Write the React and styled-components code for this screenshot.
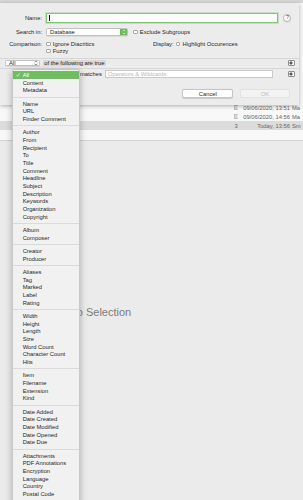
import React from 'react'
import styled, { createGlobalStyle } from 'styled-components'

const GlobalStyle = createGlobalStyle`
  html, body { margin: 0; padding: 0; }
  body {
    background: #ebebeb;
    font-family: "Liberation Sans", Arial, sans-serif;
    color: #222;
    overflow: hidden;
  }
  * { box-sizing: border-box; }
`

const MENU_ITEMS = [
  ['All', 'Content', 'Metadata'],
  ['Name', 'URL', 'Finder Comment'],
  ['Author', 'From', 'Recipient', 'To', 'Title', 'Comment', 'Headline', 'Subject', 'Description', 'Keywords', 'Organization', 'Copyright'],
  ['Album', 'Composer'],
  ['Creator', 'Producer'],
  ['Aliases', 'Tag', 'Marked', 'Label', 'Rating'],
  ['Width', 'Height', 'Length', 'Size', 'Word Count', 'Character Count', 'Hits'],
  ['Item', 'Filename', 'Extension', 'Kind'],
  ['Date Added', 'Date Created', 'Date Modified', 'Date Opened', 'Date Due'],
  ['Attachments', 'PDF Annotations', 'Encryption', 'Language', 'Country', 'Postal Code'],
]

// rows hidden behind the sheet stay empty, only the last three show
const ROWS = [
  {}, {}, {}, {}, {}, {}, {}, {}, {}, {}, {},
  { date: '09/06/2020, 13:51', name: 'Ma', icon: true },
  { date: '09/06/2020, 14:56', name: 'Ma', icon: true },
  { date: 'Today, 13:56', name: 'Sm', count: '3', selected: true },
]

const Window = styled.div`
  position: relative;
  width: 303px;
  height: 500px;
  overflow: hidden;
  display: flex;
  flex-direction: column;
  background: #ebebeb;
`

const TopStrip = styled.div`
  flex: none;
  height: 3px;
  background: #d7d7d7;
`

const Table = styled.div`
  flex: none;
  height: 138px;
  padding-top: 1.2px;
  background: #f8f8f8;
  border-bottom: 1px solid #d3d3d3;
  display: flex;
  flex-direction: column;
`

const Row = styled.div`
  flex: none;
  height: 9px;
  display: flex;
  align-items: center;
  font-size: 5.8px;
  color: #666;
  background: ${p => (p.$selected ? '#dcdcdc' : 'transparent')};
`

const RowSpacer = styled.div`
  flex: 1;
`

const IconCell = styled.div`
  width: 10px;
  display: flex;
  justify-content: center;
  align-items: center;
`

const DateCell = styled.div`
  width: 49px;
  text-align: right;
  white-space: nowrap;
`

const NameCell = styled.div`
  width: 13px;
  padding-left: 2px;
  white-space: nowrap;
  overflow: hidden;
`

const LowerArea = styled.div`
  flex: 1;
  display: flex;
`

const InfoPane = styled.div`
  width: 200px;
  display: flex;
  align-items: center;
  justify-content: center;
  padding-bottom: 17px;
  font-size: 11px;
  color: #7b7b7b;
`

/* search sheet */

const Sheet = styled.div`
  position: absolute;
  top: 3px;
  left: 0;
  width: 299px;
  height: 102px;
  background: #ececec;
  box-shadow: 0 1px 4px rgba(0, 0, 0, 0.3);
  padding-top: 9.5px;
  display: flex;
  flex-direction: column;
  font-size: 5.8px;
  color: #1f1f1f;
`

const FormRow = styled.div`
  flex: none;
  display: flex;
  align-items: center;
  height: ${p => p.$h}px;
  margin-top: ${p => p.$mt || 0}px;
  padding-left: ${p => p.$pl || 0}px;
  padding-right: ${p => p.$pr || 0}px;
  justify-content: ${p => p.$justify || 'flex-start'};
`

const Label = styled.div`
  width: 42px;
  text-align: right;
  margin-right: 4px;
  white-space: nowrap;
`

const NameField = styled.div`
  width: 231.7px;
  height: 10.6px;
  background: #fff;
  border: 1px solid #83c673;
  box-shadow: 0 0 0 0.8px rgba(131, 198, 115, 0.45);
  display: flex;
  align-items: center;
  padding-left: 1.5px;
`

const Caret = styled.div`
  width: 0.7px;
  height: 6.5px;
  background: #111;
`

const HelpButton = styled.div`
  width: 8px;
  height: 8px;
  margin-left: 5.8px;
  border-radius: 50%;
  background: #fff;
  border: 0.5px solid #b8b8b8;
  box-shadow: 0 0.5px 0.5px rgba(0, 0, 0, 0.12);
  display: flex;
  align-items: center;
  justify-content: center;
  font-size: 5.2px;
  line-height: 1;
  color: #444;
`

const Popup = styled.div`
  width: ${p => p.$w}px;
  height: ${p => p.$h}px;
  margin-left: ${p => p.$ml || 0}px;
  background: #fff;
  border: 0.5px solid #c2c2c2;
  border-radius: 1.5px;
  box-shadow: 0 0.5px 0.6px rgba(0, 0, 0, 0.14);
  display: flex;
  align-items: center;
  padding-left: 3px;
  overflow: hidden;
`

const PopupText = styled.span`
  flex: 1;
  white-space: nowrap;
`

const Stepper = styled.div`
  width: ${p => (p.$accent ? 6.7 : 6)}px;
  align-self: stretch;
  display: flex;
  align-items: center;
  justify-content: center;
  background: ${p => (p.$accent ? '#66b956' : 'transparent')};
  color: ${p => (p.$accent ? '#fff' : '#555')};
`

const Check = styled.div`
  width: 4.6px;
  height: 4.6px;
  margin-left: ${p => p.$ml || 0}px;
  margin-right: 2.2px;
  background: #fff;
  border: 0.5px solid #a9a9a9;
  border-radius: 1px;
  flex: none;
`

const OptionGroup = styled.div`
  width: 107px;
  display: flex;
  align-items: center;
`

const DisplayLabel = styled.div`
  width: 20px;
  margin-right: 2.8px;
  white-space: nowrap;
`

const CompareBlock = styled.div`
  flex: none;
  margin-top: 4px;
  display: flex;
  flex-direction: column;
`

const Divider = styled.div`
  flex: none;
  height: 1px;
  margin-top: ${p => p.$mt || 0}px;
  background: #d6d6d6;
`

const Chip = styled.div`
  margin-left: 3px;
  height: 6.6px;
  padding: 0 1.2px;
  background: #dadada;
  display: flex;
  align-items: center;
  white-space: nowrap;
`

const Grow = styled.div`
  flex: 1;
`

const PlusButton = styled.div`
  width: 6.4px;
  height: 5.8px;
  background: #fff;
  border: 0.5px solid #8d8d8d;
  border-radius: 1px;
  display: flex;
  align-items: center;
  justify-content: center;
  flex: none;
`

const MatchLabel = styled.div`
  width: 25px;
  margin-left: 5px;
  white-space: nowrap;
`

const TextField = styled.div`
  width: 168.3px;
  height: 8.3px;
  background: #fff;
  border: 0.5px solid #c9c9c9;
  display: flex;
  align-items: center;
  padding-left: 2px;
  color: #b9b9b9;
  margin-right: 15px;
  white-space: nowrap;
`

const PushButton = styled.div`
  width: ${p => p.$w}px;
  height: 9.3px;
  margin-left: ${p => p.$ml || 0}px;
  border-radius: 2px;
  display: flex;
  align-items: center;
  justify-content: center;
  background: ${p => (p.$disabled ? '#f3f3f3' : '#fff')};
  color: ${p => (p.$disabled ? '#bdbdbd' : '#1f1f1f')};
  border: 0.5px solid ${p => (p.$disabled ? '#e2e2e2' : '#c4c4c4')};
  box-shadow: ${p => (p.$disabled ? 'none' : '0 0.5px 0.8px rgba(0,0,0,0.15)')};
`

/* field menu */

const Menu = styled.div`
  position: absolute;
  top: 69px;
  left: 12px;
  width: 68px;
  height: 440px;
  padding-top: 1.2px;
  background: #f1f1f1;
  border: 0.5px solid #c8c8c8;
  border-radius: 2px;
  box-shadow: 0 2px 7px rgba(0, 0, 0, 0.28);
  overflow: hidden;
  font-size: 5.8px;
`

const MenuItem = styled.div`
  height: 7.66px;
  display: flex;
  align-items: center;
  white-space: nowrap;
  color: ${p => (p.$active ? '#fff' : '#262626')};
  background: ${p => (p.$active ? '#6cbf5c' : 'transparent')};
`

const CheckSlot = styled.div`
  width: 9.7px;
  flex: none;
  display: flex;
  justify-content: center;
  padding-left: 1px;
`

const MenuSeparator = styled.div`
  height: 5.73px;
  display: flex;
  align-items: center;
  &::after {
    content: '';
    flex: 1;
    height: 1px;
    background: #dadada;
  }
`

const ScrollArrow = styled.div`
  height: 8px;
  display: flex;
  justify-content: center;
  align-items: center;
  &::after {
    content: '';
    border-left: 2.5px solid transparent;
    border-right: 2.5px solid transparent;
    border-top: 3px solid #333;
  }
`

function Chevrons({ color = 'currentColor' }) {
  return (
    <svg width="4" height="6" viewBox="0 0 4 6">
      <path d="M0.6 2.3 L2 0.9 L3.4 2.3 M0.6 3.7 L2 5.1 L3.4 3.7" fill="none" stroke={color} strokeWidth="0.7" />
    </svg>
  )
}

function PlusIcon() {
  return (
    <svg width="4" height="4" viewBox="0 0 4 4">
      <path d="M2 0.3 V3.7 M0.3 2 H3.7" stroke="#111" strokeWidth="0.9" />
    </svg>
  )
}

function CheckIcon() {
  return (
    <svg width="4.2" height="4" viewBox="0 0 8 8">
      <path d="M1 4.4 L3 6.6 L7 1.2" fill="none" stroke="#fff" strokeWidth="1.3" strokeLinecap="round" strokeLinejoin="round" />
    </svg>
  )
}

function DocIcon() {
  return (
    <svg width="4.5" height="5" viewBox="0 0 9 10">
      <rect x="0.5" y="0.5" width="8" height="9" fill="#f4f4f4" stroke="#9a9a9a" />
      <path d="M2 3.5 H7 M2 5.5 H7 M2 7.5 H7" stroke="#aaa" />
    </svg>
  )
}

function FieldMenu() {
  return (
    <Menu>
      {MENU_ITEMS.map((group, gi) => (
        <React.Fragment key={gi}>
          {gi > 0 && <MenuSeparator />}
          {group.map(item => (
            <MenuItem key={item} $active={item === 'All'}>
              <CheckSlot>{item === 'All' && <CheckIcon />}</CheckSlot>
              {item}
            </MenuItem>
          ))}
        </React.Fragment>
      ))}
      <ScrollArrow />
    </Menu>
  )
}

function SearchSheet() {
  return (
    <Sheet>
      <FormRow $h={11}>
        <Label>Name:</Label>
        <NameField><Caret /></NameField>
        <HelpButton>?</HelpButton>
      </FormRow>
      <FormRow $h={9} $mt={4}>
        <Label>Search in:</Label>
        <Popup $w={82} $h={8}>
          <PopupText>Database</PopupText>
          <Stepper $accent><Chevrons /></Stepper>
        </Popup>
        <Check $ml={5} />
        <span>Exclude Subgroups</span>
      </FormRow>
      <CompareBlock>
        <FormRow $h={7}>
          <Label>Comparison:</Label>
          <OptionGroup>
            <Check />
            <span>Ignore Diacritics</span>
          </OptionGroup>
          <DisplayLabel>Display:</DisplayLabel>
          <Check />
          <span>Highlight Occurences</span>
        </FormRow>
        <FormRow $h={7}>
          <Label />
          <Check />
          <span>Fuzzy</span>
        </FormRow>
      </CompareBlock>
      <Divider $mt={3} />
      <FormRow $h={9} $pl={5} $pr={4.5}>
        <Popup $w={35} $h={6.6}>
          <PopupText>All</PopupText>
          <Stepper><Chevrons /></Stepper>
        </Popup>
        <Chip>of the following are true</Chip>
        <Grow />
        <PlusButton><PlusIcon /></PlusButton>
      </FormRow>
      <Divider />
      <FormRow $h={11} $pl={15} $pr={4.5}>
        {/* the field popup whose menu is open; the menu covers it */}
        <Popup $w={60} $h={7} />
        <MatchLabel>matches</MatchLabel>
        <TextField>Operators &amp; Wildcards</TextField>
        <PlusButton><PlusIcon /></PlusButton>
      </FormRow>
      <FormRow $h={9.3} $mt={9.5} $pr={9} $justify="flex-end">
        <PushButton $w={51}>Cancel</PushButton>
        <PushButton $w={50} $ml={6.7} $disabled>OK</PushButton>
      </FormRow>
    </Sheet>
  )
}

export default function App() {
  return (
    <Window>
      <GlobalStyle />
      <TopStrip />
      <Table>
        {ROWS.map((r, i) => (
          <Row key={i} $selected={r.selected}>
            <RowSpacer />
            <IconCell>{r.count ? r.count : r.icon ? <DocIcon /> : null}</IconCell>
            <DateCell>{r.date}</DateCell>
            <NameCell>{r.name}</NameCell>
          </Row>
        ))}
      </Table>
      <LowerArea>
        <InfoPane>No Selection</InfoPane>
      </LowerArea>
      <SearchSheet />
      <FieldMenu />
    </Window>
  )
}
